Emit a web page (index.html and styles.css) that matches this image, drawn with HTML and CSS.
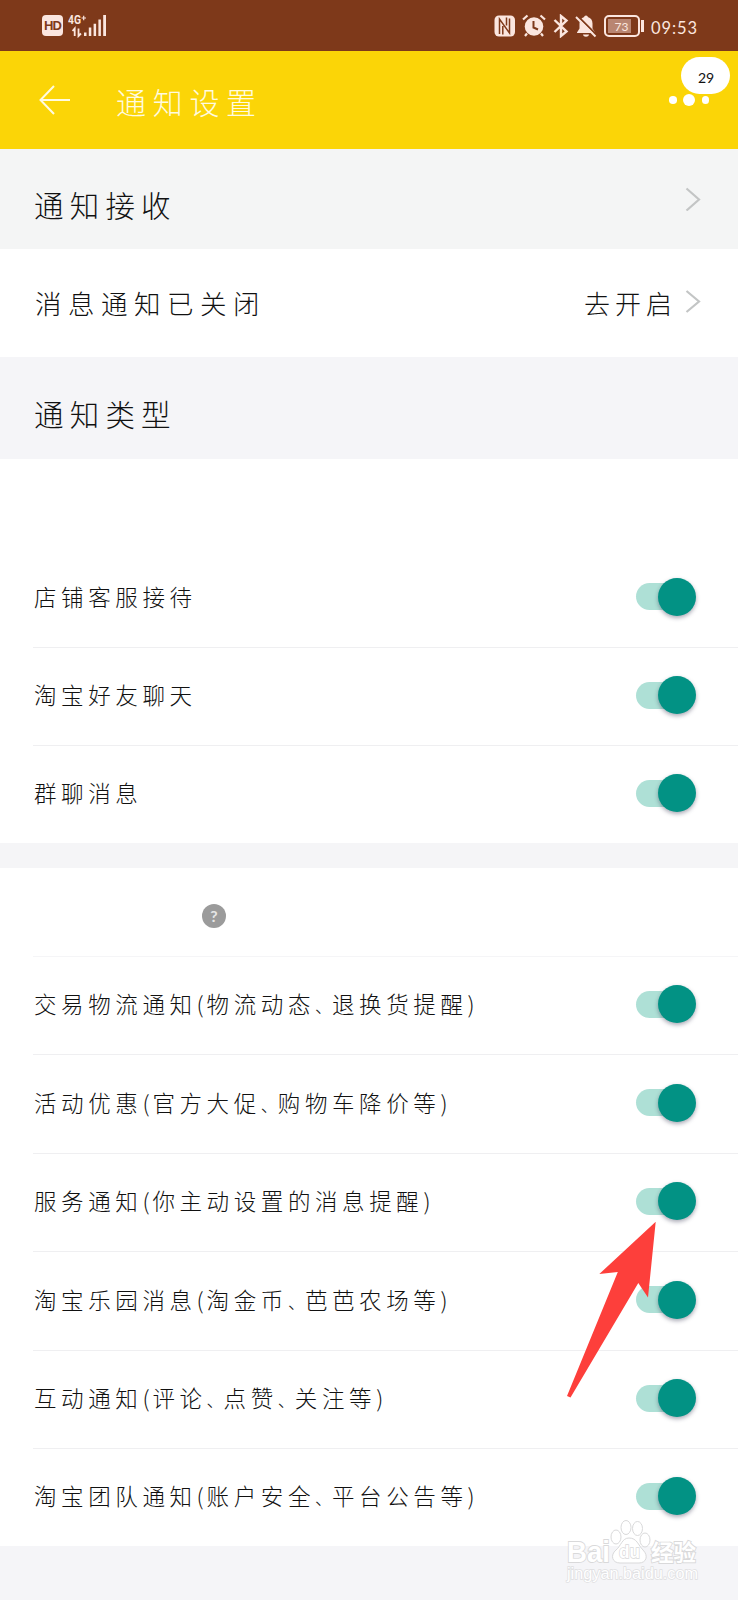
FILE: index.html
```html
<!DOCTYPE html>
<html lang="zh-CN">
<head>
  <meta charset="UTF-8">
  <title>通知设置</title>
  <link rel="stylesheet" href="styles.css">
</head>
<body>

  <div class="status-bar">
    <span class="hd">HD</span>
    <svg class="signal" width="40" height="24" viewBox="0 0 40 24">
      <text x="0" y="10" font-size="12" font-weight="700" textLength="13" lengthAdjust="spacingAndGlyphs">4G</text>
      <path d="M13.500 4h4.500M15.700 1.800v4.500" stroke="#fbe6df" stroke-width="1.200"/>
      <path d="M4.500 17l2.200-2.500V22M10.500 14.500V22l2.500-2.500" fill="none" stroke="#fbe6df" stroke-width="1.800"/>
      <path d="M16 18.500h2.500V22H16zM20.800 13.500h2.500V22h-2.500zM25.600 9.800h2.500V22h-2.500zM30.400 5.500h2.500V22h-2.500zM35.200 1h2.800v21h-2.800z"/>
    </svg>

    <div class="status-right">
      <svg width="22" height="24" viewBox="0 0 22 24">
        <rect x=".5" y="1.500" width="20.500" height="21" rx="4.500"/>
        <path d="M5.500 20V5l10 14V4.500M8.800 20.500V12M12.500 3.500v8" fill="none" stroke="#7e391a" stroke-width="1.500"/>
      </svg>
      <svg width="24" height="24" viewBox="0 0 24 24">
        <circle cx="12" cy="12.500" r="9.300"/>
        <path d="M1 5.500l4.500-4M23 5.500l-4.500-4M5 19.500l-2 2.500M19 19.500l2 2.500" stroke="#fbe6df" stroke-width="2.200"/>
        <path d="M11.500 7v6.500l4.500 2" fill="none" stroke="#7e391a" stroke-width="2"/>
      </svg>
      <svg width="16" height="24" viewBox="0 0 16 24">
        <path d="M1.500 6l12 11.500L8 22V2l5.500 4.500L1.500 18" fill="none" stroke="#fbe6df" stroke-width="2.400"/>
      </svg>
      <svg width="22" height="24" viewBox="0 0 22 24">
        <path d="M11 1.500c1.200 0 1.800.8 1.800 1.600 3 .8 4.700 3.200 4.700 6.400v5l2.500 4v.5H2v-.5l2.500-4v-5c0-3.200 1.700-5.600 4.700-6.400 0-.8.600-1.600 1.800-1.600zM8 20.500h6c-.4 3-5.600 3-6 0z"/>
        <path d="M2.300 1.600l19 19" stroke="#7e391a" stroke-width="2"/>
        <path d="M1 3l19.500 19.500" stroke="#fbe6df" stroke-width="2"/>
      </svg>
      <div class="battery"><span>73</span></div>
      <span class="clock">09:53</span>
    </div>
  </div>

  <header class="header">
    <svg width="32" height="30" viewBox="0 0 32 30">
      <path d="M31 15H1.500M15 1L1.500 15 15 29" fill="none" stroke="#fffbe0" stroke-width="2"/>
    </svg>
    <h1>通知设置</h1>
    <div class="more">
      <i></i><i class="big"></i><i></i>
      <span class="badge">29</span>
    </div>
  </header>

  <section class="heading receive">
    <h2>通知接收</h2>
    <svg class="chevron" width="16" height="24" viewBox="0 0 16 24"><path d="M1.500 1.500L14 12.500 1.500 23.500"/></svg>
  </section>

  <div class="open-row">
    <span>消息通知已关闭</span>
    <span class="go">去开启</span>
    <svg class="chevron" width="16" height="24" viewBox="0 0 16 24"><path d="M1.500 1L14 11.500 1.500 22"/></svg>
  </div>

  <section class="heading types">
    <h2>通知类型</h2>
  </section>

  <div class="group">
    <div class="group-title"></div>
    <div class="item"><span>店铺客服接待</span><b class="switch"></b></div>
    <div class="item"><span>淘宝好友聊天</span><b class="switch"></b></div>
    <div class="item last"><span>群聊消息</span><b class="switch"></b></div>
  </div>

  <div class="divider"></div>

  <div class="group">
    <div class="group-title lined"><span class="help">?</span></div>
    <div class="item"><span>交易物流通知<i class="br">(</i>物流动态<i class="dot">、</i>退换货提醒<i class="br">)</i></span><b class="switch"></b></div>
    <div class="item"><span>活动优惠<i class="br">(</i>官方大促<i class="dot">、</i>购物车降价等<i class="br">)</i></span><b class="switch"></b></div>
    <div class="item"><span>服务通知<i class="br">(</i>你主动设置的消息提醒<i class="br">)</i></span><b class="switch"></b></div>
    <div class="item"><span>淘宝乐园消息<i class="br">(</i>淘金币<i class="dot">、</i>芭芭农场等<i class="br">)</i></span><b class="switch"></b></div>
    <div class="item"><span>互动通知<i class="br">(</i>评论<i class="dot">、</i>点赞<i class="dot">、</i>关注等<i class="br">)</i></span><b class="switch"></b></div>
    <div class="item last"><span>淘宝团队通知<i class="br">(</i>账户安全<i class="dot">、</i>平台公告等<i class="br">)</i></span><b class="switch"></b></div>
  </div>

  <!-- pointer to the service notification switch -->
  <svg class="pointer" width="90" height="178" viewBox="0 0 90 178">
    <path d="M88.700 1.700L32.300 54l18.500-2L0 176l3.500 1.500L71.300 63 81 77.500z" fill="#fd3f3b"/>
  </svg>

  <svg class="watermark" width="140" height="66" viewBox="0 0 140 66">
    <text x="5" y="42" font-size="30" font-weight="700" textLength="43" lengthAdjust="spacingAndGlyphs">Bai</text>
    <g fill="#fff" stroke="#d9d9da" stroke-width="1">
      <ellipse cx="54" cy="17" rx="5" ry="7"/>
      <ellipse cx="64" cy="7.500" rx="5" ry="7"/>
      <ellipse cx="75.500" cy="8.500" rx="5" ry="7"/>
      <ellipse cx="83" cy="20" rx="5" ry="7"/>
      <path d="M67 18c8 0 9 7 14 12 6 6 3 13-4 13H58c-8 0-10-8-4-13 5-4 6-12 13-12z"/>
    </g>
    <text class="du" x="57" y="38" font-size="18" font-weight="700" textLength="21" lengthAdjust="spacingAndGlyphs">du</text>
    <text x="89" y="41" font-size="23" font-weight="700" textLength="45" lengthAdjust="spacingAndGlyphs">经验</text>
    <text class="site" x="5" y="59" font-size="16" textLength="131" lengthAdjust="spacingAndGlyphs">jingyan.baidu.com</text>
  </svg>

</body>
</html>
```

FILE: styles.css
```css
* {
  box-sizing: border-box;
}

body {
  position: relative;
  margin: 0;
  height: 1600px;
  overflow: hidden;
  font-family: "Noto Sans CJK SC", sans-serif;
  font-weight: 300;
  color: #111;
  background: #f5f5f8;
}

h1, h2 {
  margin: 0;
  font-weight: 300;
}

i {
  font-style: normal;
}

/* status bar */
.status-bar {
  display: flex;
  align-items: center;
  height: 51px;
  padding: 0 41px 0 42px;
  background: #7e391a;
  color: #fbe6df;
  fill: #fbe6df;
}

.hd {
  width: 21px;
  height: 21px;
  border-radius: 4px;
  background: #fbe6df;
  color: #7e391a;
  font: 700 13px/21px "Liberation Sans", sans-serif;
  letter-spacing: -1px;
  text-align: center;
}

.signal {
  margin-left: 5px;
  font-family: Roboto, sans-serif;
}

.status-right {
  display: flex;
  align-items: center;
  gap: 6.5px;
  margin-left: auto;
}

.battery {
  position: relative;
  width: 36px;
  height: 22px;
  padding: 2px;
  border: 2px solid #fbe6df;
  border-radius: 5px;
}

.battery span {
  display: block;
  width: 23px;
  height: 14px;
  padding-left: 7px;
  background: #b98672;
  font: 12px/15px Lato, sans-serif;
}

.battery::after {
  content: "";
  position: absolute;
  right: -6px;
  top: 3px;
  width: 3px;
  height: 12px;
  background: #fbe6df;
}

.clock {
  width: 46px;
  margin: 4px 0 0 5px;
  font: 16.5px/20px Lato, sans-serif;
  letter-spacing: 0.9px;
}

/* yellow header */
.header {
  display: flex;
  align-items: center;
  height: 98px;
  padding: 0 29px 0 39px;
  background: #fbd507;
  color: #fffbe0;
}

.header h1 {
  margin: 2px 0 0 45px;
  font-size: 30px;
  line-height: 40px;
  letter-spacing: 6.7px;
}

.more {
  position: relative;
  display: flex;
  align-items: center;
  gap: 6.5px;
  margin-left: auto;
}

.more i {
  width: 7.5px;
  height: 7.5px;
  border-radius: 50%;
  background: #fff;
}

.more i.big {
  width: 12px;
  height: 12px;
}

.badge {
  position: absolute;
  left: 12px;
  bottom: 12px;
  width: 49px;
  height: 37px;
  padding: 3px 0 0 1px;
  border-radius: 19px;
  background: #fff;
  color: #111;
  font: 14px/35px Lato, sans-serif;
  text-align: center;
}

/* section headings */
.heading {
  display: flex;
  align-items: center;
  justify-content: space-between;
  padding: 0 37px 0 34px;
}

.heading.receive {
  height: 100px;
  background: #f4f5f5;
}

.heading.types {
  height: 102px;
}

.heading h2 {
  padding-top: 10px;
  font-size: 29.5px;
  line-height: 40px;
  letter-spacing: 6.2px;
}

.chevron {
  fill: none;
  stroke: #c3c5c5;
  stroke-width: 2.2;
}

.open-row {
  display: flex;
  align-items: center;
  height: 108px;
  padding: 0 37px 2px 35px;
  background: #fff;
  font-size: 26.5px;
  letter-spacing: 6.5px;
}

.open-row .go {
  margin: 1px 8px 0 auto;
  font-size: 26px;
  letter-spacing: 5px;
}

/* switch lists */
.group {
  padding-left: 33px;
  background: #fff;
}

.group-title {
  height: 90px;
}

.group-title.lined {
  height: 89px;
  padding: 36px 0 0 169px;
  border-bottom: 1px solid #f5f5f7;
}

.help {
  display: block;
  width: 24px;
  height: 24px;
  border-radius: 50%;
  background: #9b9b9b;
  color: #e6e6e6;
  font: 700 16px/24px Lato, sans-serif;
  text-align: center;
}

.item {
  display: flex;
  align-items: center;
  justify-content: space-between;
  height: 98.5px;
  padding: 0 42px 0 1px;
  border-bottom: 1px solid #efeff1;
  font-size: 22.5px;
  letter-spacing: 4.6px;
  white-space: nowrap;
}

.item > span {
  padding-bottom: 4px;
}

.item.last {
  height: 96.5px;
  border-bottom: 0;
}

.item .br,
.item .dot {
  display: inline-block;
  width: 10px;
  letter-spacing: 0;
}

.item .dot {
  width: 17px;
  font-size: 17px;
}

.switch {
  position: relative;
  width: 60px;
  height: 27px;
  margin-bottom: 2px;
  border-radius: 14px;
  background: linear-gradient(to right, #aee0d6 36px, transparent 36px);
}

.switch::after {
  content: "";
  position: absolute;
  right: 0;
  top: -5.5px;
  width: 38px;
  height: 38px;
  border-radius: 50%;
  background: #029284;
  box-shadow: 0 2px 4px rgba(40, 40, 70, 0.4);
}

.divider {
  height: 25px;
  background: #f5f5f7;
}

.pointer {
  position: absolute;
  left: 567px;
  top: 1220px;
}

.watermark {
  position: absolute;
  left: 562px;
  top: 1520px;
  font-family: "Liberation Sans", "Noto Sans CJK SC", sans-serif;
}

.watermark text {
  fill: #fff;
  stroke: #d9d9da;
  stroke-width: 1.8;
  paint-order: stroke;
}

.watermark .du {
  stroke-width: 1.4;
}

.watermark .site {
  stroke: #dedee0;
  stroke-width: 1.4;
}
```
